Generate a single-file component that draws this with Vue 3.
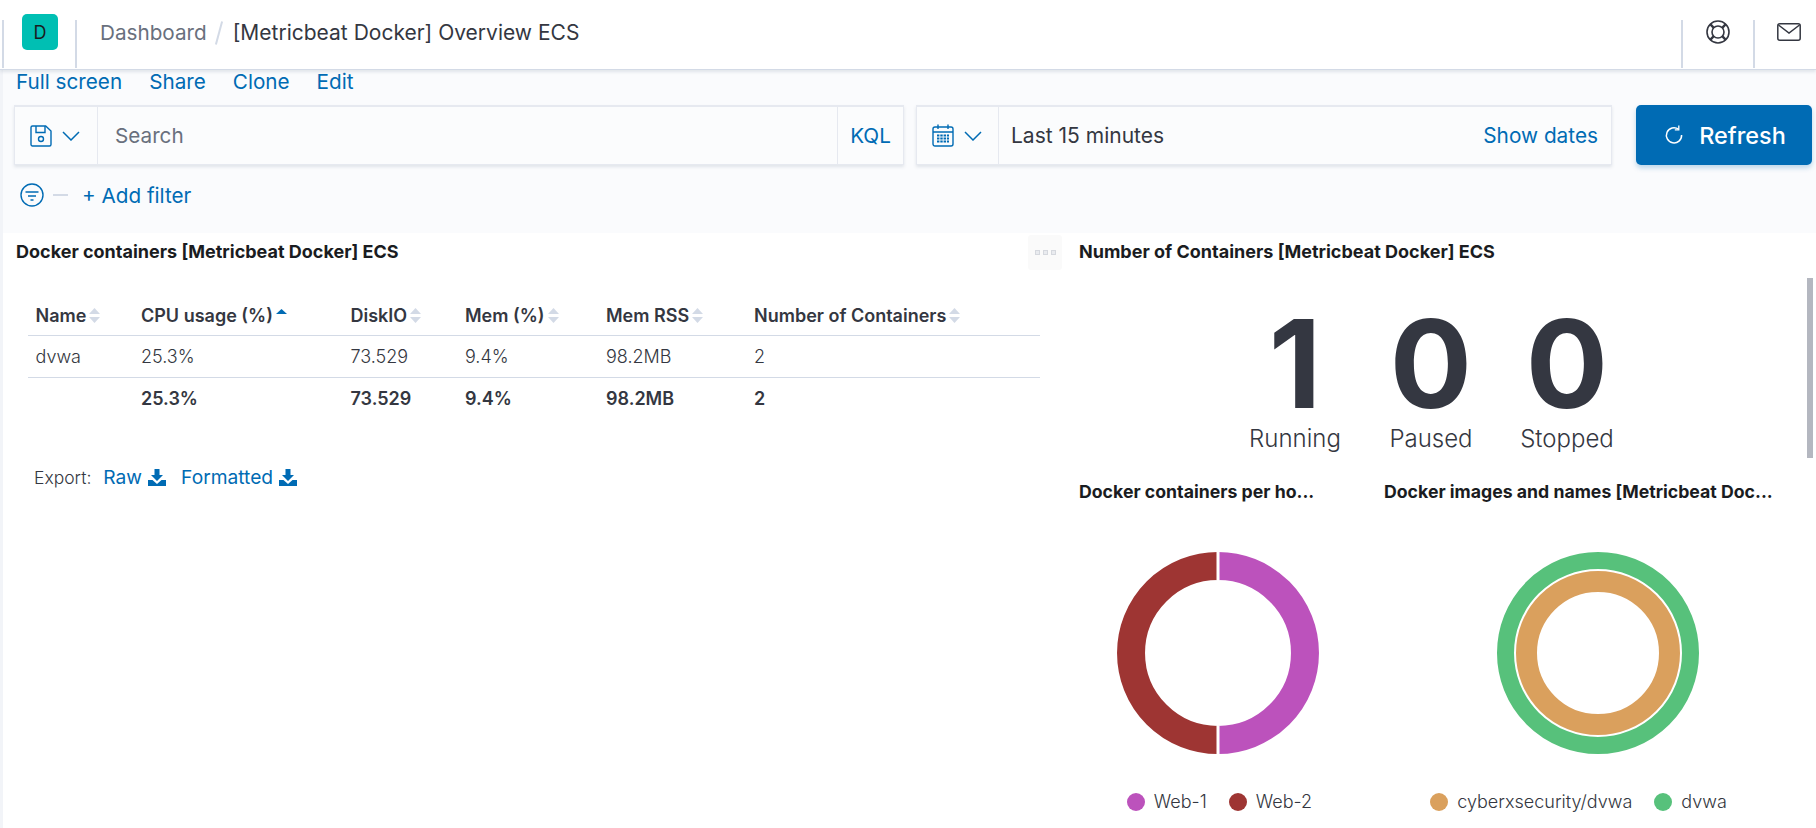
<script setup>
const links = ['Full screen', 'Share', 'Clone', 'Edit']
const columns = [
  { name: 'Name', value: 'dvwa', total: '' },
  { name: 'CPU usage (%)', value: '25.3%', total: '25.3%', sorted: true },
  { name: 'DiskIO', value: '73.529', total: '73.529' },
  { name: 'Mem (%)', value: '9.4%', total: '9.4%' },
  { name: 'Mem RSS', value: '98.2MB', total: '98.2MB' },
  { name: 'Number of Containers', value: '2', total: '2' }
]
const stats = [
  { value: '1', label: 'Running' },
  { value: '0', label: 'Paused' },
  { value: '0', label: 'Stopped' }
]
</script>

<template>
  <div class="page">
    <header class="topbar">
      <span class="vr first"></span>
      <span class="avatar">D</span>
      <span class="vr second"></span>
      <nav class="crumbs">
        <span class="crumb-muted">Dashboard</span>
        <span class="slash"></span>
        <span class="crumb-current">[Metricbeat Docker] Overview ECS</span>
      </nav>
      <div class="top-actions">
        <span class="vr"></span>
        <span class="top-icon">
          <svg width="24" height="24" viewBox="0 0 24 24" fill="none" stroke="#343741" stroke-width="1.6">
            <circle cx="12" cy="12" r="11" />
            <circle cx="12" cy="12" r="6" />
            <path d="M4.2 4.2 7.8 7.8M19.8 4.2 16.2 7.8M4.2 19.8 7.8 16.2M19.8 19.8 16.2 16.2" stroke-width="2.4" />
          </svg>
        </span>
        <span class="vr"></span>
        <span class="top-icon mail">
          <svg width="24" height="18" viewBox="0 0 24 18" fill="none" stroke="#343741" stroke-width="1.5">
            <rect x="0.8" y="0.8" width="22.4" height="16.4" rx="2" />
            <path d="M1.5 2 12 10 22.5 2" />
          </svg>
        </span>
      </div>
    </header>

    <section class="toolbar">
      <div class="links">
        <a v-for="l in links" :key="l" class="link">{{ l }}</a>
      </div>

      <div class="query-row">
        <div class="box search-box">
          <div class="prepend">
            <svg width="22" height="22" viewBox="0 0 22 22" fill="none" stroke="#006bb4" stroke-width="1.4">
              <path d="M2.5 1h13.2L21 6v13.5a1.5 1.5 0 0 1-1.5 1.5h-17A1.5 1.5 0 0 1 1 19.500v-17A1.500 1.500 0 0 1 2.500 1Z" />
              <path d="M6 1v6.500h9V1" />
              <circle cx="11" cy="14" r="2.500" />
            </svg>
            <svg class="chev" width="18" height="10" viewBox="0 0 18 10" fill="none" stroke="#006bb4" stroke-width="1.500">
              <path d="M1 1l8 8 8-8" />
            </svg>
          </div>
          <span class="placeholder">Search</span>
          <span class="kql">KQL</span>
        </div>

        <div class="box date-box">
          <div class="prepend date-prepend">
            <svg width="22" height="23" viewBox="0 0 22 23" fill="none" stroke="#006bb4" stroke-width="1.400">
              <rect x="1" y="3" width="20" height="19" rx="2" />
              <path d="M1 8h20M6 0.500v4.500M16 0.500v4.500" />
              <path d="M5 11.500h12M5 14.500h12M5 17.500h12" stroke-width="2" stroke-dasharray="2.400 0.900" />
            </svg>
            <svg class="chev" width="18" height="10" viewBox="0 0 18 10" fill="none" stroke="#006bb4" stroke-width="1.500">
              <path d="M1 1l8 8 8-8" />
            </svg>
          </div>
          <span class="range">Last 15 minutes</span>
          <a class="show-dates">Show dates</a>
        </div>

        <button class="refresh">
          <svg width="20" height="20" viewBox="0 0 20 20" fill="none" stroke="#fff" stroke-width="1.500">
            <path d="M14.500 4.200A7.600 7.600 0 1 0 17.600 10" />
            <path d="M14.800 0.500v4.300h-4" stroke-width="1.300" />
          </svg>
          <span>Refresh</span>
        </button>
      </div>

      <div class="filter-row">
        <svg width="24" height="24" viewBox="0 0 24 24" fill="none" stroke="#006bb4" stroke-width="1.400">
          <circle cx="12" cy="12" r="11" />
          <path d="M5.500 9h13M8 13h8M10.500 17h3" />
        </svg>
        <span class="dash"></span>
        <a class="add-filter">+ Add filter</a>
      </div>
    </section>

    <main class="panels">
      <section class="panel-left">
        <h3 class="panel-title">Docker containers [Metricbeat Docker] ECS</h3>
        <div class="table">
          <div class="row head">
            <div v-for="c in columns" :key="c.name" class="cell">
              <span>{{ c.name }}</span>
              <svg v-if="c.sorted" class="sort" width="11" height="15" viewBox="0 0 11 15">
                <path d="M5.500 1 11 6H0Z" fill="#006bb4" />
              </svg>
              <svg v-else class="sort" width="11" height="15" viewBox="0 0 11 15">
                <path d="M5.500 0 11 6H0Z" fill="#d3dae6" />
                <path d="M5.500 15 0 9H11Z" fill="#d3dae6" />
              </svg>
            </div>
          </div>
          <div class="row body">
            <div v-for="c in columns" :key="c.name" class="cell">{{ c.value }}</div>
          </div>
          <div class="row total">
            <div v-for="c in columns" :key="c.name" class="cell">{{ c.total }}</div>
          </div>
        </div>
        <div class="export">
          <span class="export-label">Export:</span>
          <a class="link-sm">Raw</a>
          <svg width="18" height="17" viewBox="0 0 18 17" fill="#006bb4">
            <path d="M6.500 0h5v6h3.500L9 12 3 6h3.500Z" />
            <path d="M0 11h4.500L9 15l4.500-4H18v6H0Z" />
          </svg>
          <a class="link-sm second-link">Formatted</a>
          <svg width="18" height="17" viewBox="0 0 18 17" fill="#006bb4">
            <path d="M6.500 0h5v6h3.500L9 12 3 6h3.500Z" />
            <path d="M0 11h4.500L9 15l4.500-4H18v6H0Z" />
          </svg>
        </div>
      </section>

      <div class="handle-col">
        <div class="handle"><i></i><i></i><i></i></div>
      </div>

      <section class="panel-right">
        <h3 class="panel-title">Number of Containers [Metricbeat Docker] ECS</h3>
        <div class="stats">
          <div v-for="s in stats" :key="s.label" class="stat">
            <div class="stat-value">{{ s.value }}</div>
            <div class="stat-label">{{ s.label }}</div>
          </div>
        </div>
        <div class="charts">
          <div class="chart chart-a">
            <h3 class="panel-title chart-title">Docker containers per ho...</h3>
            <svg class="donut" width="202" height="202" viewBox="0 0 202 202" fill="none">
              <path d="M101 14A87 87 0 0 1 101 188" stroke="#bc52bc" stroke-width="28" />
              <path d="M101 188A87 87 0 0 1 101 14" stroke="#9e3533" stroke-width="28" />
              <path d="M101 0V28M101 174V202" stroke="#fff" stroke-width="3" />
            </svg>
            <div class="legend legend-a">
              <span class="dot purple"></span><span class="legend-text">Web-1</span>
              <span class="dot red next"></span><span class="legend-text">Web-2</span>
            </div>
          </div>
          <div class="chart chart-b">
            <h3 class="panel-title chart-title">Docker images and names [Metricbeat Doc...</h3>
            <svg class="donut" width="202" height="202" viewBox="0 0 202 202" fill="none">
              <circle cx="101" cy="101" r="92.500" stroke="#57c17b" stroke-width="17" />
              <circle cx="101" cy="101" r="71.500" stroke="#daa05d" stroke-width="21" />
            </svg>
            <div class="legend legend-b">
              <span class="dot orange"></span><span class="legend-text">cyberxsecurity/dvwa</span>
              <span class="dot green next"></span><span class="legend-text">dvwa</span>
            </div>
          </div>
        </div>
        <div class="scrollbar"></div>
      </section>
    </main>
  </div>
</template>

<style>
html, body { margin: 0; background: #fff; }
</style>

<style scoped>
.page {
  width: 1816px;
  height: 828px;
  overflow: hidden;
  position: relative;
  background: #fff;
  font-family: Inter, "Liberation Sans", sans-serif;
  color: #343741;
  display: flex;
  flex-direction: column;
}
.topbar {
  height: 69px;
  flex: none;
  display: flex;
  align-items: flex-start;
  background: #fff;
  border-bottom: 1px solid #d3dae6;
  box-shadow: 0 2px 3px rgba(152, 162, 179, 0.25);
  position: relative;
  z-index: 1;
}
.vr {
  width: 2px;
  height: 48px;
  margin-top: 20px;
  background: #d3dae6;
  flex: none;
}
.vr.first { margin-left: 2px; }
.avatar {
  width: 36px;
  height: 36px;
  margin: 14px 0 0 18px;
  border-radius: 5px;
  background: #00bfb3;
  color: #1a1c21;
  font-size: 18px;
  display: flex;
  align-items: center;
  justify-content: center;
  flex: none;
}
.vr.second { margin-left: 17px; }
.crumbs {
  display: flex;
  align-items: center;
  height: 65px;
  margin-left: 23px;
  font-size: 21px;
}
.crumb-muted { color: #69707d; font-size: 20.700px; }
.slash {
  width: 2px;
  height: 24px;
  margin: 0 13px 0 11px;
  background: #d3dae6;
  transform: rotate(15deg);
}
.top-actions {
  margin-left: auto;
  display: flex;
}
.top-icon {
  width: 70px;
  height: 68px;
  display: flex;
  justify-content: center;
  padding-top: 20px;
  box-sizing: border-box;
}
.top-icon.mail {
  width: 61px;
  padding: 23px 0 0 22px;
  justify-content: flex-start;
}
.toolbar {
  height: 163px;
  flex: none;
  background: #fafbfd;
  border-left: 3px solid #f2f4f8;
  box-sizing: border-box;
}
.links {
  display: flex;
  gap: 27px;
  height: 35px;
  padding: 0 0 12px 13px;
  box-sizing: border-box;
  align-items: center;
}
.link {
  font-size: 20.700px;
  color: #006bb4;
}
.query-row {
  display: flex;
  margin-left: 11px;
  height: 60px;
}
.box {
  display: flex;
  align-items: center;
  background: #fbfcfd;
  border: 1px solid #e6e9f0;
  border-top-width: 2px;
  box-shadow: 0 2px 3px rgba(152, 162, 179, 0.25);
  box-sizing: border-box;
}
.search-box { width: 890px; }
.date-box { width: 696px; margin-left: 12px; }
.prepend {
  width: 83px;
  height: 100%;
  flex: none;
  box-sizing: border-box;
  border-right: 1px solid #e6e9f0;
  padding-left: 15px;
  display: flex;
  align-items: center;
}
.date-prepend { width: 82px; padding-left: 15px; }
.chev { margin-left: 10px; }
.placeholder {
  margin-left: 17px;
  font-size: 20.700px;
  color: #69707d;
  flex: 1;
}
.kql {
  width: 66px;
  height: 100%;
  box-sizing: border-box;
  border-left: 1px solid #e6e9f0;
  font-size: 20.700px;
  color: #006bb4;
  display: flex;
  align-items: center;
  justify-content: center;
}
.range {
  margin-left: 12px;
  font-size: 21px;
  flex: 1;
}
.show-dates {
  margin-right: 13px;
  font-size: 20.800px;
  color: #006bb4;
}
.refresh {
  width: 176px;
  height: 60px;
  margin-left: 24px;
  padding: 0 0 0 2px;
  border: none;
  border-radius: 5px;
  background: #006bb4;
  color: #fff;
  font-family: inherit;
  font-size: 23.400px;
  font-weight: 500;
  display: flex;
  align-items: center;
  justify-content: center;
  gap: 15px;
  box-shadow: 0 3px 5px rgba(0, 107, 180, 0.25);
}
.filter-row {
  display: flex;
  align-items: center;
  height: 60px;
  padding-left: 17px;
}
.dash {
  width: 15px;
  height: 2px;
  background: #d3dae6;
  margin-left: 9px;
}
.add-filter {
  margin-left: 14px;
  font-size: 20.700px;
  color: #006bb4;
}
.panels {
  flex: 1;
  min-height: 0;
  display: flex;
  border-left: 3px solid #f2f4f8;
}
.panel-left {
  width: 1025px;
  flex: none;
  padding: 9px 0 0 13px;
  box-sizing: border-box;
}
.panel-title {
  margin: 0;
  font-size: 18px;
  line-height: 20px;
  font-weight: 700;
  color: #1a1c21;
}
.table {
  margin: 33px 0 0 12px;
  width: 1012px;
}
.row {
  display: grid;
  grid-template-columns: 105.500px 209.500px 114.500px 141px 148px 1fr;
  padding-left: 7.500px;
  align-items: center;
  height: 41px;
  font-size: 18px;
}
.row + .row { border-top: 1px solid #d3dae6; }
.head { height: 40px; font-weight: 600; }
.body { font-weight: 300; }
.total { font-weight: 600; height: 40px; }
.cell { display: flex; align-items: center; gap: 3px; white-space: pre; }
.sort { flex: none; }
.export {
  display: flex;
  align-items: center;
  margin: 47px 0 0 18px;
  font-size: 17.500px;
}
.export-label { margin-right: 12px; font-weight: 300; }
.link-sm { color: #006bb4; font-size: 19.200px; margin-right: 6px; }
.second-link { margin-left: 15px; }
.handle-col { width: 34px; flex: none; padding-top: 2px; }
.handle {
  width: 34px;
  height: 35px;
  background: #fafafa;
  border-radius: 3px;
  display: flex;
  align-items: center;
  justify-content: center;
  gap: 3px;
}
.handle i {
  width: 5px;
  height: 5px;
  box-sizing: border-box;
  border: 1px solid #d5d8de;
  background: #e9ebef;
}
.panel-right {
  flex: 1;
  min-width: 0;
  padding: 9px 0 0 17px;
  position: relative;
}
.stats {
  display: flex;
  margin: 41px 0 0 148px;
  height: 179px;
}
.stat { width: 136px; text-align: center; }
.stat-value {
  font-size: 122px;
  line-height: 121px;
  font-weight: 700;
  color: #343741;
}
.stat-label {
  font-size: 24px;
  line-height: 30px;
  font-weight: 300;
}
.charts {
  display: flex;
  gap: 27px;
}
.chart {
  display: flex;
  flex-direction: column;
  align-items: center;
  flex: none;
}
.chart-a { width: 278px; }
.chart-b { width: 428px; }
.chart-title { align-self: flex-start; white-space: nowrap; font-size: 17.700px; }
.donut { margin-top: 50px; display: block; }
.legend {
  display: flex;
  align-items: center;
  margin-top: 37px;
  font-size: 18px;
  font-weight: 300;
}
.legend-a { margin-left: 3px; }
.legend-b { margin-right: 39px; }
.dot {
  width: 18px;
  height: 18px;
  border-radius: 50%;
  margin-right: 9px;
  flex: none;
}
.dot.next { margin-left: 22px; }
.purple { background: #bc52bc; }
.red { background: #9e3533; }
.orange { background: #daa05d; }
.green { background: #57c17b; }
.scrollbar {
  position: absolute;
  top: 45px;
  right: 3px;
  width: 6px;
  height: 180px;
  background: #b4b7c0;
}
</style>
